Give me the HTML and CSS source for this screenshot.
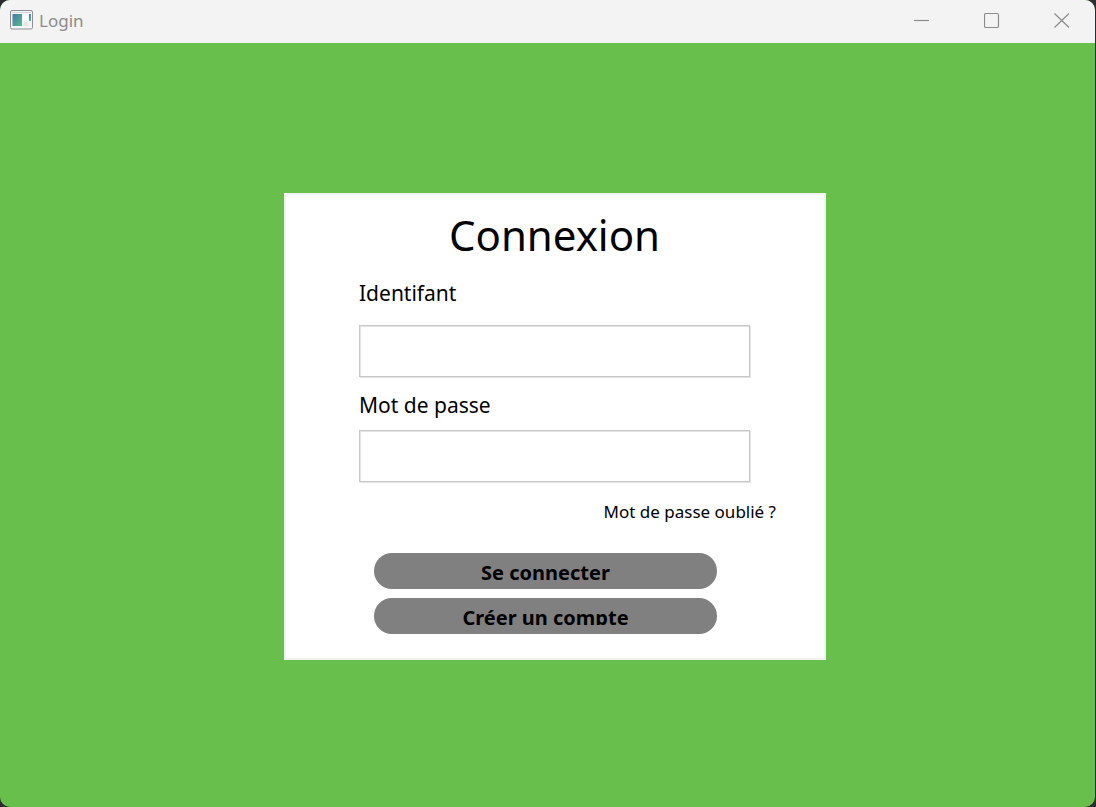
FILE: index.html
```html
<!DOCTYPE html>
<html lang="fr">
<head>
<meta charset="utf-8">
<title>Login</title>
<link rel="stylesheet" href="styles.css">
</head>
<body>
<div class="window">
  <header class="titlebar">
    <svg class="app-icon" width="23" height="20" viewBox="0 0 23 20" aria-hidden="true">
      <defs><linearGradient id="g" x1="0" y1="0" x2="1" y2="1"><stop offset="0" stop-color="#4579ad"/><stop offset="1" stop-color="#5cb98a"/></linearGradient></defs>
      <rect x=".5" y=".5" width="22" height="18.500" rx="1.5" fill="#f4f5f6" stroke="#8c9094"/>
      <path d="M2 2.500h19" stroke="#d5d8da"/>
      <rect x="2.500" y="4" width="9.500" height="12" fill="url(#g)"/>
      <rect x="13.500" y="4" width="4.500" height="6" fill="#fff"/>
      <rect x="13.500" y="12" width="4.500" height="4" fill="#e6e8e6"/>
      <rect x="19" y="4" width="2" height="7" fill="url(#g)"/>
    </svg>
    <span class="window-title">Login</span>
    <div class="controls">
      <button class="control" aria-label="Réduire"><svg width="16" height="16" viewBox="0 0 16 16"><path d="M0 8.5h15"/></svg></button>
      <button class="control" aria-label="Agrandir"><svg width="16" height="16" viewBox="0 0 16 16"><rect x="0.500" y="1.5" width="14" height="14" rx="1.5"/></svg></button>
      <button class="control" aria-label="Fermer"><svg width="16" height="16" viewBox="0 0 16 16"><path d="M.5 1.500l14.500 14M15 1.500L.5 15.500"/></svg></button>
    </div>
  </header>
  <main class="content">
    <form class="card">
      <h1 class="heading">Connexion</h1>
      <label class="label" for="user">Identifant</label>
      <input class="field field-user" id="user" type="text">
      <label class="label" for="password">Mot de passe</label>
      <input class="field" id="password" type="password">
      <a class="forgot" href="#">Mot de passe oublié ?</a>
      <div class="actions">
        <button class="action" type="submit"><span class="action-text">Se connecter</span></button>
        <button class="action" type="button"><span class="action-text action-text-clipped">Créer un compte</span></button>
      </div>
    </form>
  </main>
</div>
</body>
</html>
```
FILE: styles.css
```css
* { box-sizing: border-box; }
body {
  margin: 0;
  background: #2b2b30;
  color: #000;
  font-family: "Segoe UI", "Noto Sans", "Open Sans", sans-serif;
}
.window {
  display: flex;
  flex-direction: column;
  min-height: 100vh;
  margin-right: 1px;
  border-radius: 10px;
  overflow: hidden;
  background: #68bf4b;
}
.titlebar {
  display: flex;
  align-items: center;
  height: 43px;
  padding: 0 0 3px 10px;
  background: #f3f3f3;
  color: #8c8c8c;
}
.window-title { margin-left: 6px; padding-top: 2px; font-size: 17px; line-height: 24px; }
.controls { display: flex; margin-left: auto; }
.control {
  display: flex;
  align-items: center;
  justify-content: center;
  width: 70px;
  height: 40px;
  padding: 0 0 0 3px;
  border: 0;
  background: transparent;
}
.control svg { fill: none; stroke: #8c8c8c; stroke-width: 1.2; }
.content {
  display: flex;
  flex: 1;
  align-items: center;
  justify-content: center;
  padding: 3px 0 0 15px;
}
.card {
  display: flex;
  flex-direction: column;
  width: 100%;
  max-width: 542px;
  padding: 10px 74px 24px 73px;
  border: 2px solid #f3f3f3;
  background: #fff;
}
.heading {
  margin: 0 0 13px;
  font-size: 42px;
  font-weight: 400;
  line-height: 60px;
  text-align: center;
}
.label { font-size: 21px; line-height: 30px; }
.field {
  width: 100%;
  height: 52px;
  margin-top: 10px;
  padding: 0 8px;
  border: 1px solid #c8c8c8;
  border-radius: 0;
  box-shadow: 1px 1px 0 #e4e4e4, inset 1px 1px 0 #e4e4e4;
  font: inherit;
  font-size: 21px;
}
.field-user { margin: 17px 0 13px; }
.forgot {
  align-self: flex-end;
  margin: 18px -26px 0 0;
  color: inherit;
  font-size: 17px;
  line-height: 24px;
  text-decoration: none;
}
.actions {
  display: flex;
  flex-direction: column;
  gap: 9px;
  margin: 29px 33px 0 15px;
}
.action {
  height: 36px;
  padding: 4px 9px 8px;
  border: 0;
  border-radius: 18px;
  background: #808080;
  color: #000;
  font: inherit;
  font-size: 20px;
  font-weight: 700;
}
.action-text {
  display: block;
  height: 24px;
  line-height: 32px;
}
/* The caption area ends above the descenders. */
.action-text-clipped { height: 23px; margin-bottom: 1px; overflow: hidden; }
```
